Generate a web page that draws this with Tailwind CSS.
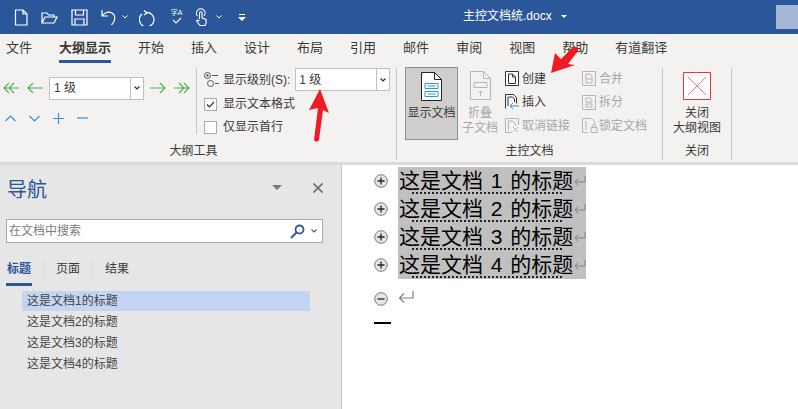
<!DOCTYPE html>
<html lang="zh-CN">
<head>
<meta charset="UTF-8">
<title>主控文档统.docx</title>
<script src="https://cdn.jsdelivr.net/npm/@tailwindcss/browser@4"></script>
</head>
<body class="w-[798px] h-[409px] overflow-hidden bg-white font-['Liberation_Sans','Noto_Sans_CJK_SC',sans-serif] text-[#3b3a39]">
<div class="relative w-[798px] h-[409px] flex flex-col overflow-hidden">

  <!-- title bar -->
  <header class="h-[34px] shrink-0 bg-[#2b579a] relative flex items-center text-white">
    <div class="flex items-center pl-[14px]">
      <svg width="14" height="17" viewBox="0 0 14 17" fill="none" stroke="#fff" stroke-width="1.2"><path d="M1.5 1H9l4 4v11H1.5zM9 1v4h4"/></svg>
      <svg class="ml-[13px]" width="17" height="13" viewBox="0 0 17 13" fill="none" stroke="#fff" stroke-width="1.2"><path d="M1 12V2h5l1.5 2H13v2M1 12l3-6h12l-3 6z"/></svg>
      <svg class="ml-[13px]" width="17" height="17" viewBox="0 0 17 17" fill="none" stroke="#fff" stroke-width="1.2"><path d="M1 1h15v15H1zM4.500 1v5h8V1M4 16v-6h9v6"/></svg>
      <svg class="ml-[13px]" width="16" height="17" viewBox="0 0 16 17" fill="none" stroke="#fff" stroke-width="1.2"><path d="M1 1v6h6M1.500 6.500C4 3 8 2.500 11 4c4 2.500 3.500 8-.5 12"/></svg>
      <svg class="ml-[5px]" width="6" height="4" viewBox="0 0 6 4" fill="none" stroke="#fff"><path d="M.5.500 3 3 5.500.5"/></svg>
      <svg class="ml-[11px]" width="17" height="17" viewBox="0 0 17 17" fill="none" stroke="#fff" stroke-width="1.2"><path d="M5 1.500 8 4 5 6M7.500 3.300A7.300 7.300 0 1 1 3 5"/></svg>
      <div class="ml-[13px] w-[15px] h-[18px] flex flex-col items-center">
        <span class="text-[7px] leading-[9px] whitespace-nowrap">字A</span>
        <svg width="10" height="7" viewBox="0 0 10 7" fill="none" stroke="#fff" stroke-width="1.1"><path d="m1 3 3 3 5-5"/></svg>
      </div>
      <svg class="ml-[11px]" width="13" height="18" viewBox="0 0 13 18" fill="none" stroke="#fff" stroke-width="1.1"><path d="M2.500 8A4.300 4.300 0 1 1 9 8M4.500 11V5a1.300 1.300 0 0 1 2.600 0v5l4 1.500V15l-1 2.500H5L1.500 13l1-1 2 1"/></svg>
      <svg class="ml-[8px]" width="6" height="4" viewBox="0 0 6 4" fill="none" stroke="#fff"><path d="M.5.500 3 3 5.500.5"/></svg>
      <svg class="ml-[16px]" width="8" height="7" viewBox="0 0 8 7" fill="#fff"><path d="M1 0h6v1H1zM0 3h8L4 7z"/></svg>
    </div>
    <div class="absolute left-[463px] top-[7px] text-[12px] leading-[18px] whitespace-nowrap">主控文档统.docx</div>
    <div class="absolute left-[561px] top-[15px] w-0 h-0 border-x-[3px] border-x-transparent border-t-[3px] border-t-white"></div>
    <div class="absolute left-[776px] top-[5px] w-[22px] h-[24px] bg-[#a5b9d5]"></div>
  </header>

  <!-- tabs -->
  <nav class="h-[28px] shrink-0 bg-[#f3f2f1] flex pl-[6px] gap-[27px] text-[13px] leading-[28px] whitespace-nowrap">
    <span>文件</span>
    <span class="relative font-bold">大纲显示<span class="absolute left-0 right-0 bottom-[-1px] h-[3px] bg-[#2b579a]"></span></span>
    <span>开始</span><span>插入</span><span>设计</span><span>布局</span><span>引用</span><span>邮件</span><span>审阅</span><span>视图</span><span>帮助</span><span>有道翻译</span>
  </nav>

  <!-- ribbon -->
  <section class="h-[100px] shrink-0 bg-[#f3f2f1] flex text-[12px]">
    <!-- outline tools -->
    <div class="w-[397px] shrink-0 flex flex-col border-r border-[#c8c6c4] mb-[2px] mt-[6px]">
      <div class="h-[74px] flex">
        <div class="w-[197px] shrink-0 border-r border-[#c8c6c4] h-[66px]">
          <div class="flex items-center h-[24px] mt-[8px] pl-[3px]">
            <svg width="16" height="12" viewBox="0 0 16 12" fill="none" stroke="#4caf50" stroke-width="1.1"><path d="M6 1 1 6l5 5M11 1 6 6l5 5M1 6h15"/></svg>
            <svg class="ml-[8px]" width="16" height="12" viewBox="0 0 16 12" fill="none" stroke="#4caf50" stroke-width="1.1"><path d="M6 1 1 6l5 5M1 6h15"/></svg>
            <div class="ml-[6px] w-[95px] h-[23px] bg-white border border-[#c0c0c0] flex items-center">
              <span class="flex-1 pl-[4px] text-[12px]">1 级</span>
              <span class="w-[13px] h-full border-l border-[#c0c0c0] flex items-center justify-center"><svg width="6" height="4" viewBox="0 0 6 4" fill="none" stroke="#333" stroke-width="1.2"><path d="M.5.500 3 3 5.500.5"/></svg></span>
            </div>
            <svg class="ml-[6px]" width="16" height="12" viewBox="0 0 16 12" fill="none" stroke="#4caf50" stroke-width="1.1"><path d="m10 1 5 5-5 5M0 6h15"/></svg>
            <svg class="ml-[8px]" width="16" height="12" viewBox="0 0 16 12" fill="none" stroke="#4caf50" stroke-width="1.1"><path d="m10 1 5 5-5 5M5 1l5 5-5 5M0 6h15"/></svg>
          </div>
          <div class="flex items-center h-[12px] mt-[12px] pl-[5px]">
            <svg width="11" height="7" viewBox="0 0 11 7" fill="none" stroke="#2e96dc" stroke-width="1.2"><path d="m.5 6 5-5 5 5"/></svg>
            <svg class="ml-[13px]" width="11" height="7" viewBox="0 0 11 7" fill="none" stroke="#2e96dc" stroke-width="1.2"><path d="m.5 1 5 5 5-5"/></svg>
            <svg class="ml-[13px]" width="11" height="11" viewBox="0 0 11 11" fill="none" stroke="#2e96dc" stroke-width="1.2"><path d="M5.500 0v11M0 5.500h11"/></svg>
            <svg class="ml-[13px]" width="11" height="2" viewBox="0 0 11 2" fill="none" stroke="#2e96dc" stroke-width="1.2"><path d="M0 1h11"/></svg>
          </div>
        </div>
        <div class="flex-1 pl-[7px]">
          <div class="flex items-center h-[23px]">
            <svg width="16" height="15" viewBox="0 0 16 15" fill="none" stroke="#555"><circle cx="3.500" cy="3.500" r="3"/><circle cx="3.500" cy="3.500" r=".8" fill="#555"/><circle cx="6.500" cy="11.500" r="3"/><path d="M8 3.500h6M11 11.500h4"/></svg>
            <span class="ml-[3px] whitespace-nowrap">显示级别(S):</span>
            <div class="ml-[5px] w-[95px] h-[23px] bg-white border border-[#c0c0c0] flex items-center">
              <span class="flex-1 pl-[3px]">1 级</span>
              <span class="w-[13px] h-full border-l border-[#c0c0c0] flex items-center justify-center"><svg width="6" height="4" viewBox="0 0 6 4" fill="none" stroke="#333" stroke-width="1.2"><path d="M.5.500 3 3 5.500.5"/></svg></span>
            </div>
          </div>
          <div class="flex items-center h-[14px] mt-[6px]">
            <span class="w-[13px] h-[13px] bg-white border border-[#ababab] flex items-center justify-center"><svg width="9" height="7" viewBox="0 0 9 7" fill="none" stroke="#333" stroke-width="1.2"><path d="m1 3.500 2.500 2.500L8 1"/></svg></span>
            <span class="ml-[6px] leading-[14px] whitespace-nowrap">显示文本格式</span>
          </div>
          <div class="flex items-center h-[14px] mt-[9px]">
            <span class="w-[13px] h-[13px] bg-white border border-[#ababab]"></span>
            <span class="ml-[6px] leading-[14px] whitespace-nowrap">仅显示首行</span>
          </div>
        </div>
      </div>
      <div class="text-center leading-[16px] mt-[1px] pr-[9px]">大纲工具</div>
    </div>

    <!-- master document -->
    <div class="w-[266px] shrink-0 flex flex-col border-r border-[#c8c6c4] mb-[2px] mt-[6px]">
      <div class="h-[74px] flex pl-[8px] items-start">
        <div class="w-[53px] h-[73px] shrink-0 mt-[-1px] bg-[#d0cfcd] border border-[#8e8e8c] flex flex-col items-center">
          <svg class="mt-[4px]" width="21" height="29" viewBox="0 0 21 29" fill="#fff" stroke="#222"><path d="M.5.500h13l7 7v21H.5z"/><path d="M13.500.500v7h7" fill="none"/><path d="M4 11.500h13v5H4zM4 19.500h13v5H4z" fill="none" stroke="#2e96dc"/><path d="M6.500 14h8M6.500 22h8" stroke="#2e96dc"/></svg>
          <span class="mt-[4px] text-[12px] leading-[16px] whitespace-nowrap">显示文档</span>
        </div>
        <div class="w-[36px] shrink-0 ml-[4px] flex flex-col items-center text-[#a6a6a6] leading-[15px] pt-[3px]">
          <svg class="mb-[6px]" width="21" height="29" viewBox="0 0 21 29" fill="none" stroke="#b5b5b5"><path d="M.5.500h13l7 7v21H.5zM13.500.500v7h7"/><path d="M4 11.500h13v5H4zM10.500 25v-5M8.500 22l2-2 2 2"/></svg>
          <span>折叠</span><span class="whitespace-nowrap">子文档</span>
        </div>
        <div class="w-[77px] shrink-0 ml-[7px] mt-[-1px] flex flex-col">
          <div class="h-[23px] flex items-center">
            <svg width="14" height="15" viewBox="0 0 14 15" fill="#fff" stroke="#333"><path d="M.5.500h13v14H.5z"/><path d="M3.500 3h4l3 3v6.500h-7zM7.500 3v3h3"/></svg>
            <span class="ml-[3px]">创建</span>
          </div>
          <div class="h-[24px] flex items-center">
            <svg width="14" height="16" viewBox="0 0 14 16" fill="none" stroke="#333"><path d="M.5 14.500V.500h8l3 3v6M3.500 3h4l2 2v3M3 12v-9"/><path d="M14 12H5M8 9l-3 3 3 3" stroke="#2e96dc"/></svg>
            <span class="ml-[3px]">插入</span>
          </div>
          <div class="h-[23px] flex items-center text-[#a6a6a6]">
            <svg width="14" height="15" viewBox="0 0 14 15" fill="none" stroke="#b5b5b5"><path d="M7 14.500H.5V.500h13V7M3.500 3h4l3 3v2M3.500 3v9M8 9l5 5M13 9l-5 5"/></svg>
            <span class="ml-[3px] whitespace-nowrap">取消链接</span>
          </div>
        </div>
        <div class="flex flex-col mt-[-1px] text-[#a6a6a6]">
          <div class="h-[23px] flex items-center">
            <svg width="14" height="15" viewBox="0 0 14 15" fill="none" stroke="#b5b5b5"><path d="M.5.500h13v14H.5zM4 3h4l2 2v7H4zM4 8h6"/></svg>
            <span class="ml-[3px]">合并</span>
          </div>
          <div class="h-[24px] flex items-center">
            <svg width="14" height="15" viewBox="0 0 14 15" fill="none" stroke="#b5b5b5"><path d="M.5.500h13v14H.5zM4 3h4l2 2v2H4zM4 9h6v3H4z"/></svg>
            <span class="ml-[3px]">拆分</span>
          </div>
          <div class="h-[23px] flex items-center">
            <svg width="16" height="15" viewBox="0 0 16 15" fill="none" stroke="#b5b5b5"><path d="M6 14.500H.5V.500h9l3 3V6M4 3v9M9 9.500h6v5H9zM10.500 9.500V8a1.500 1.500 0 0 1 3 0v1.500"/></svg>
            <span class="ml-[1px] whitespace-nowrap">锁定文档</span>
          </div>
        </div>
      </div>
      <div class="text-center leading-[16px] mt-[1px]">主控文档</div>
    </div>

    <!-- close -->
    <div class="w-[69px] shrink-0 flex flex-col border-r border-[#c8c6c4] mb-[2px] mt-[6px]">
      <div class="h-[74px] flex flex-col items-center leading-[15px] pt-[4px]">
        <svg class="mb-[6px]" width="28" height="28" viewBox="0 0 28 28" fill="#fff" stroke="#e8353a"><path d="M.5.500h27v27H.5z"/><path d="m5 5 18 18M23 5 5 23" stroke="#f07a7d"/></svg>
        <span>关闭</span><span class="whitespace-nowrap">大纲视图</span>
      </div>
      <div class="text-center leading-[16px] mt-[1px]">关闭</div>
    </div>
  </section>

  <!-- body -->
  <main class="flex-1 flex min-h-0 border-t-[3px] border-[#dcdbd9]">
    <aside class="w-[342px] shrink-0 bg-[#e6e6e6] border-r border-[#c6c6c6] pl-[6px]">
      <div class="flex items-center h-[47px] pt-[3px]">
        <span class="text-[20px] leading-[28px] text-[#2b579a] ml-[1px] w-[265px]">导航</span>
        <span class="w-0 h-0 border-x-[5px] border-x-transparent border-t-[5px] border-t-[#7a7a7a] mt-[-5px]"></span>
        <svg class="ml-[31px] mt-[-5px]" width="10" height="10" viewBox="0 0 10 10" fill="none" stroke="#6e6e6e" stroke-width="1.6"><path d="m.5.500 9 9M9.500.500l-9 9"/></svg>
      </div>
      <div class="w-[317px] h-[24px] mt-[7px] bg-white border border-[#ababab] flex items-center">
        <span class="flex-1 pl-[2px] text-[12px] text-[#7b7b7b]">在文档中搜索</span>
        <svg width="15" height="15" viewBox="0 0 15 15" fill="none" stroke="#2b579a" stroke-width="1.8"><circle cx="9.500" cy="5.500" r="4"/><path d="M6.500 8.500 1 14"/></svg>
        <svg class="ml-[6px] mr-[5px]" width="6" height="4" viewBox="0 0 6 4" fill="none" stroke="#555" stroke-width="1.1"><path d="M.5.500 3 3 5.500.5"/></svg>
      </div>
      <div class="flex mt-[16px] h-[28px] text-[12px] leading-[21px]">
        <span class="relative w-[26px] font-bold text-[#2b579a] pl-[1px]">标题<span class="absolute left-0 right-0 top-[24px] h-[3px] bg-[#2b579a]"></span></span>
        <span class="ml-[11px] w-px h-[20px] bg-[#dcdcdc]"></span>
        <span class="ml-[12px]">页面</span>
        <span class="ml-[11px] w-px h-[20px] bg-[#dcdcdc]"></span>
        <span class="ml-[13px]">结果</span>
      </div>
      <ul class="ml-[16px] mt-[4px] w-[288px] text-[12px] leading-[21px] text-[#444]">
        <li class="pl-[5px] h-[20px] leading-[20px] mb-[1px] bg-[#c3d5f2]">这是文档1的标题</li>
        <li class="pl-[5px]">这是文档2的标题</li>
        <li class="pl-[5px]">这是文档3的标题</li>
        <li class="pl-[5px]">这是文档4的标题</li>
      </ul>
    </aside>

    <article class="flex-1 bg-white pl-[32px] pt-[2px] text-[21px] leading-[28px] text-black [word-spacing:2px]">
      <div class="flex h-[28px] items-center">
        <svg width="14" height="14" viewBox="0 0 14 14" fill="#e4e4e4" stroke="#777"><circle cx="7" cy="7" r="6.300"/><path d="M3.500 7h7M7 3.500v7" stroke="#222" stroke-width="1.300"/></svg>
        <div class="relative ml-[10px] w-[188px] h-[28px] bg-[#c0c0c0] flex items-center whitespace-nowrap">
          <span class="pl-px">这是文档 1 的标题</span>
          <svg class="ml-px" width="12" height="11" viewBox="0 0 12 11" fill="none" stroke="#808080"><path d="M11.500 0v6H1M4.500 2.500 1 6l3.500 3.500"/></svg>
          <span class="absolute left-[14px] w-[150px] top-[25px] border-b-2 border-dotted border-[#222]"></span>
        </div>
      </div>
      <div class="flex h-[28px] items-center">
        <svg width="14" height="14" viewBox="0 0 14 14" fill="#e4e4e4" stroke="#777"><circle cx="7" cy="7" r="6.300"/><path d="M3.500 7h7M7 3.500v7" stroke="#222" stroke-width="1.300"/></svg>
        <div class="relative ml-[10px] w-[188px] h-[28px] bg-[#c0c0c0] flex items-center whitespace-nowrap">
          <span class="pl-px">这是文档 2 的标题</span>
          <svg class="ml-px" width="12" height="11" viewBox="0 0 12 11" fill="none" stroke="#808080"><path d="M11.500 0v6H1M4.500 2.500 1 6l3.500 3.500"/></svg>
          <span class="absolute left-[14px] w-[150px] top-[25px] border-b-2 border-dotted border-[#222]"></span>
        </div>
      </div>
      <div class="flex h-[28px] items-center">
        <svg width="14" height="14" viewBox="0 0 14 14" fill="#e4e4e4" stroke="#777"><circle cx="7" cy="7" r="6.300"/><path d="M3.500 7h7M7 3.500v7" stroke="#222" stroke-width="1.300"/></svg>
        <div class="relative ml-[10px] w-[188px] h-[28px] bg-[#c0c0c0] flex items-center whitespace-nowrap">
          <span class="pl-px">这是文档 3 的标题</span>
          <svg class="ml-px" width="12" height="11" viewBox="0 0 12 11" fill="none" stroke="#808080"><path d="M11.500 0v6H1M4.500 2.500 1 6l3.500 3.500"/></svg>
          <span class="absolute left-[14px] w-[150px] top-[25px] border-b-2 border-dotted border-[#222]"></span>
        </div>
      </div>
      <div class="flex h-[28px] items-center">
        <svg width="14" height="14" viewBox="0 0 14 14" fill="#e4e4e4" stroke="#777"><circle cx="7" cy="7" r="6.300"/><path d="M3.500 7h7M7 3.500v7" stroke="#222" stroke-width="1.300"/></svg>
        <div class="relative ml-[10px] w-[188px] h-[28px] bg-[#c0c0c0] flex items-center whitespace-nowrap">
          <span class="pl-px">这是文档 4 的标题</span>
          <svg class="ml-px" width="12" height="11" viewBox="0 0 12 11" fill="none" stroke="#808080"><path d="M11.500 0v6H1M4.500 2.500 1 6l3.500 3.500"/></svg>
          <span class="absolute left-[14px] w-[150px] top-[25px] border-b-2 border-dotted border-[#222]"></span>
        </div>
      </div>
      <div class="flex items-center h-[28px] mt-[6px]">
        <svg width="14" height="14" viewBox="0 0 14 14" fill="#e4e4e4" stroke="#777"><circle cx="7" cy="7" r="6.300"/><path d="M3.500 7h7" stroke="#222" stroke-width="1.300"/></svg>
        <svg class="ml-[10px] mb-[4px]" width="16" height="13" viewBox="0 0 16 13" fill="none" stroke="#808080" stroke-width="1.200"><path d="M15 0v7H1.500M6 2.500 1.500 7 6 11.500"/></svg>
      </div>
      <div class="w-[17px] h-[2px] bg-black mt-[9px]"></div>
    </article>
  </main>

  <!-- red annotation arrows -->
  <svg class="absolute left-[300px] top-[40px]" width="285" height="105" viewBox="0 0 285 105" fill="#ed1c24">
    <path d="M20 49 29 73 23 70 19 100c-1 2-4 2-5 0L18 68 9 70z"/>
    <path d="M251 33 255 13 261 19 273 7c3-1 6 1 5 4L268 24 275 25z"/>
  </svg>
</div>
</body>
</html>
